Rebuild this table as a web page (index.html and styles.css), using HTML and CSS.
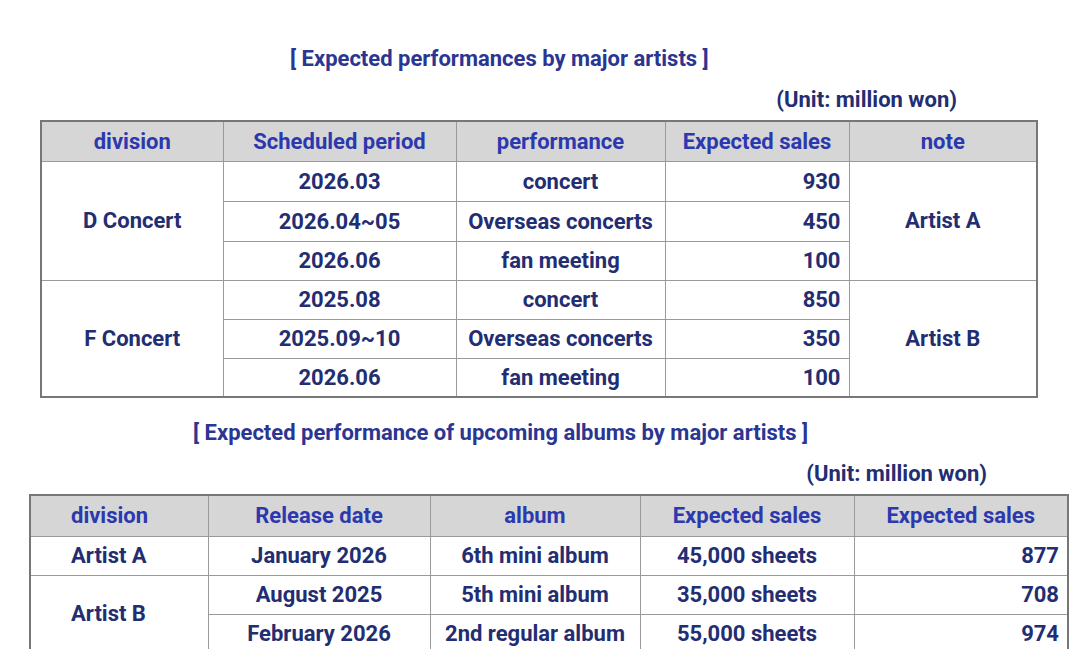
FILE: index.html
```html
<!DOCTYPE html>
<html>
<head>
<meta charset="utf-8">
<link rel="stylesheet" href="styles.css">
</head>
<body>
<div class="page">
  <div class="title t1">[ Expected performances by major artists ]</div>
  <div class="unit u1">(Unit: million won)</div>
  <table class="grid g1">
    <colgroup><col class="c1"><col class="c2"><col class="c3"><col class="c4"><col class="c5"></colgroup>
    <thead>
      <tr class="hd"><th>division</th><th>Scheduled period</th><th>performance</th><th>Expected sales</th><th>note</th></tr>
    </thead>
    <tbody>
      <tr class="r40"><td rowspan="3">D Concert</td><td>2026.03</td><td>concert</td><td class="num">930</td><td rowspan="3">Artist A</td></tr>
      <tr class="r40"><td>2026.04~05</td><td>Overseas concerts</td><td class="num">450</td></tr>
      <tr class="r39"><td>2026.06</td><td>fan meeting</td><td class="num">100</td></tr>
      <tr class="r39"><td rowspan="3">F Concert</td><td>2025.08</td><td>concert</td><td class="num">850</td><td rowspan="3">Artist B</td></tr>
      <tr class="r39"><td>2025.09~10</td><td>Overseas concerts</td><td class="num">350</td></tr>
      <tr class="r39"><td>2026.06</td><td>fan meeting</td><td class="num">100</td></tr>
    </tbody>
  </table>
  <div class="title t2">[ Expected performance of upcoming albums by major artists ]</div>
  <div class="unit u2">(Unit: million won)</div>
  <div class="clip">
    <table class="grid g2">
      <colgroup><col class="d1"><col class="d2"><col class="d3"><col class="d4"><col class="d5"></colgroup>
      <thead>
        <tr class="hd2"><th class="left">division</th><th>Release date</th><th>album</th><th>Expected sales</th><th>Expected sales</th></tr>
      </thead>
      <tbody>
        <tr class="r39"><td class="left">Artist A</td><td>January 2026</td><td>6th mini album</td><td>45,000 sheets</td><td class="num">877</td></tr>
        <tr class="r39"><td class="left" rowspan="2">Artist B</td><td>August 2025</td><td>5th mini album</td><td>35,000 sheets</td><td class="num">708</td></tr>
        <tr class="r39 last"><td>February 2026</td><td>2nd regular album</td><td>55,000 sheets</td><td class="num">974</td></tr>
      </tbody>
    </table>
  </div>
</div>
</body>
</html>
```
FILE: styles.css
```css
html, body {
  margin: 0;
  padding: 0;
  background: #ffffff;
}
body {
  font-family: Roboto, "Liberation Sans", sans-serif;
  font-weight: 700;
  color: #232d72;
}
.page {
  width: 1080px;
  height: 664px;
  overflow: hidden;
  padding-top: 46px;
  box-sizing: border-box;
}
.title {
  font-size: 22px;
  line-height: 26px;
  color: #2b3592;
}
.t1 {
  padding-left: 290px;
}
.unit {
  font-size: 22px;
  line-height: 26px;
  color: #232d72;
  text-align: right;
}
.u1 {
  margin-top: 15px;
  padding-right: 123px;
  height: 33px;
}
.grid {
  border-collapse: collapse;
  table-layout: fixed;
  font-size: 22px;
}
.grid th, .grid td {
  border: 1px solid #9a9a9a;
  padding: 1px 8px 0;
  text-align: center;
  white-space: nowrap;
  line-height: 24px;
}
.grid th {
  background: #d6d6d6;
  color: #2c38ad;
  font-weight: 700;
}
.g1 {
  margin-left: 40px;
  width: 996px;
  border: 2px solid #777;
}
.g1 .c1 { width: 182px; }
.g1 .c2 { width: 233px; }
.g1 .c3 { width: 209px; }
.g1 .c4 { width: 184px; }
.g1 .c5 { width: 188px; }
.hd { height: 40px; }
.hd2 { height: 41px; }
.r40 { height: 40px; }
.r39 { height: 39px; }
.grid td.num {
  text-align: right;
  padding-right: 8px;
}
.t2 {
  margin-top: 22px;
  padding-left: 193px;
}
.u2 {
  margin-top: 15px;
  padding-right: 93px;
  height: 33px;
}
.clip {
  margin-left: 29px;
  width: 1040px;
  height: 155px;
  overflow: hidden;
}
.g2 {
  width: 1038px;
  border: 2px solid #777;
}
.g2 .d1 { width: 178px; }
.g2 .d2 { width: 222px; }
.g2 .d3 { width: 210px; }
.g2 .d4 { width: 214px; }
.g2 .d5 { width: 214px; }
.grid th.left, .grid td.left {
  text-align: left;
  padding-left: 40px;
}
.last td { border-bottom: none; }
```
